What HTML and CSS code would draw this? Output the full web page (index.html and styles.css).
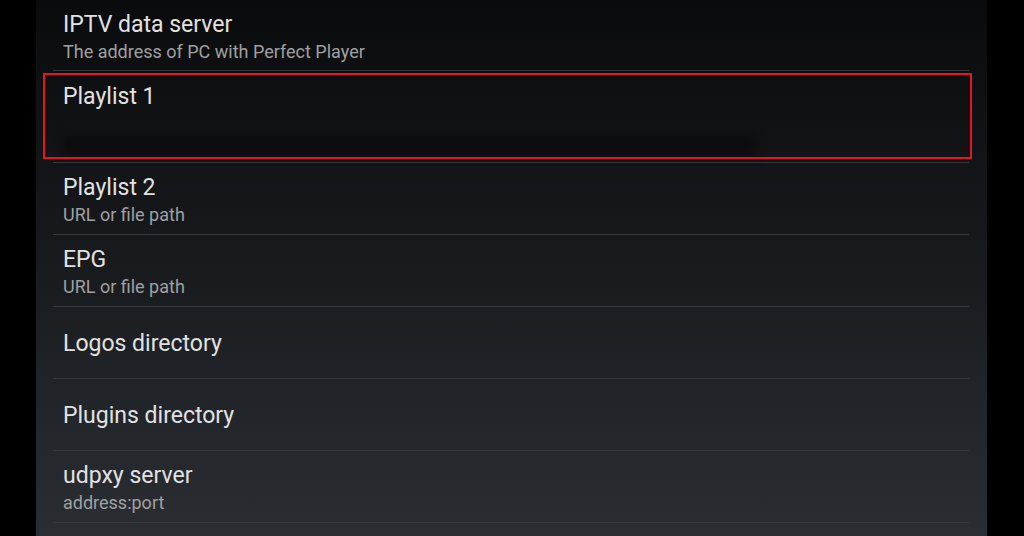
FILE: index.html
```html
<!DOCTYPE html>
<html>
<head>
<meta charset="utf-8">
<link rel="stylesheet" href="styles.css">
</head>
<body>
<div class="panel">
  <div class="list">
    <div class="row first">
      <div class="title">IPTV data server</div>
      <div class="sub">The address of PC with Perfect Player</div>
    </div>
    <div class="row tall">
      <div class="title">Playlist 1</div>
      <div class="redact"></div>
      <div class="highlight"></div>
    </div>
    <div class="row">
      <div class="title">Playlist 2</div>
      <div class="sub">URL or file path</div>
    </div>
    <div class="row">
      <div class="title">EPG</div>
      <div class="sub">URL or file path</div>
    </div>
    <div class="row">
      <div class="title">Logos directory</div>
    </div>
    <div class="row">
      <div class="title">Plugins directory</div>
    </div>
    <div class="row">
      <div class="title">udpxy server</div>
      <div class="sub">address:port</div>
    </div>
  </div>
</div>
</body>
</html>
```

FILE: styles.css
```css
html, body {
  margin: 0;
  padding: 0;
  background: #000;
  height: 536px;
  overflow: hidden;
}
body {
  font-family: Roboto, "Noto Sans", sans-serif;
}
.panel {
  margin-left: 36px;
  width: 951px;
  height: 536px;
  background: linear-gradient(to bottom, #0a0b0c 0%, #15171a 40%, #2a2e33 100%);
}
.list {
  padding: 0 18px 0 17px;
}
.row {
  position: relative;
  box-sizing: border-box;
  height: 72px;
  border-bottom: 1px solid #34383c;
  padding: 2px 0 0 10px;
  display: flex;
  flex-direction: column;
  justify-content: center;
}
.row.first {
  height: 71px;
}
.row.tall {
  height: 92px;
  justify-content: flex-start;
  padding-top: 11px;
}
.title {
  font-size: 23px;
  line-height: 30px;
  color: #e2e2e2;
}
.sub {
  font-size: 18px;
  line-height: 22px;
  margin-top: 1px;
  color: #a0a0a0;
}
.redact {
  margin-top: 23px;
  width: 694px;
  height: 20px;
  background: #050607;
  filter: blur(5px);
  opacity: 0.5;
}
.highlight {
  position: absolute;
  left: -10px;
  right: -3px;
  top: 2px;
  bottom: 3px;
  border: 2px solid #e8141e;
}
```
